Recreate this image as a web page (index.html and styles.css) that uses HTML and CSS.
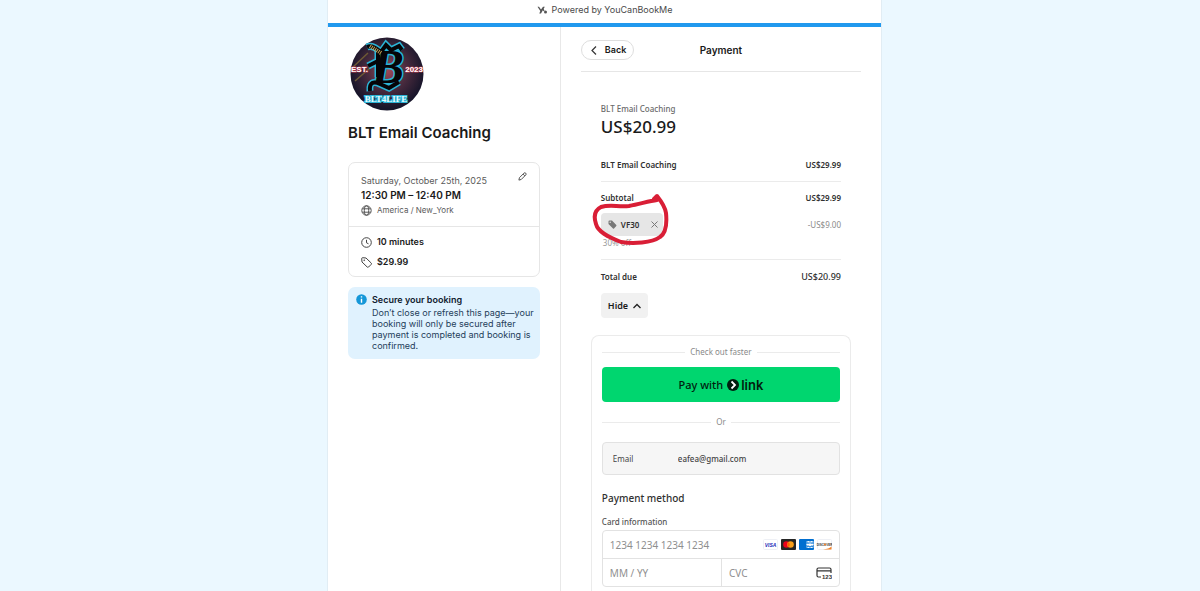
FILE: index.html
```html
<!DOCTYPE html>
<html lang="en">
<head>
    <meta charset="UTF-8">
    <meta name="viewport" content="width=device-width, initial-scale=1.0">
    <title>BLT Email Coaching - Payment</title>
    <link rel="stylesheet" href="styles.css">
</head>
<body>
    <div class="page">
        <header class="powered">
            <svg width="11" height="8" viewBox="0 0 11 8">
                <path d="M.5.800h1.500L4 3.500 6 .8h1.800L4 7.500H2.300L3.300 5z" fill="#555"/>
                <path d="M6 3l1 2" stroke="#555" stroke-width="1.200"/>
                <circle cx="8.500" cy="6" r="1.500" fill="#555"/>
            </svg>
            <span>Powered by YouCanBookMe</span>
        </header>

        <div class="columns">
            <aside class="sidebar">
                <svg class="logo" viewBox="0 0 74 74" role="img" aria-label="BLT4LIFE logo">
                    <defs>
                        <radialGradient id="glow" cx="50%" cy="45%" r="52%">
                            <stop offset="0" stop-color="#a34a59"/>
                            <stop offset="0.5" stop-color="#4c2c3f"/>
                            <stop offset="1" stop-color="#17152a"/>
                        </radialGradient>
                    </defs>
                    <circle cx="37" cy="37" r="36.500" fill="url(#glow)"/>
                    <path d="M3 30L18 16M5 44L20 31" stroke="#6d5a35" stroke-width="1.500"/>
                    <g class="logo-flourish">
                        <path d="M17 10c5-2 9 1 14 5l5-7 5 5 8-4 3 4"/>
                        <path d="M28 14v26M18 29l10-5"/>
                        <path d="M20 54c-1-9 4-10 10-7l9 4 10-6"/>
                    </g>
                    <text class="logo-b" x="38" y="46" text-anchor="middle">B</text>
                    <g class="logo-flourish-fill">
                        <path d="M17 10c5-2 9 1 14 5l5-7 5 5 8-4 3 4"/>
                        <path d="M28 14v26M18 29l10-5"/>
                        <path d="M20 54c-1-9 4-10 10-7l9 4 10-6"/>
                    </g>
                    <path d="M20 9l11 7" stroke="#c9a456" stroke-width="4" stroke-dasharray="1 1"/>
                    <text class="logo-side" x="1" y="35">EST.</text>
                    <text class="logo-side" x="73" y="35" text-anchor="end">2023</text>
                    <text class="logo-foot" x="36" y="65" text-anchor="middle">BLT4LIFE</text>
                </svg>
                <h1>BLT Email Coaching</h1>

                <section class="booking">
                    <div class="booking-when">
                        <button class="edit" aria-label="Edit booking">
                            <svg width="9" height="9" viewBox="0 0 10 10" fill="none" stroke="#444">
                                <path d="M1 9l.6-2.700L6.600 1.300a1.400 1.400 0 0 1 2 2L3.600 8.300zM5.600 2.300l2 2"/>
                            </svg>
                        </button>
                        <p class="date">Saturday, October 25th, 2025</p>
                        <p class="time">12:30 PM – 12:40 PM</p>
                        <p class="zone">
                            <svg width="11" height="11" viewBox="0 0 11 11" fill="none" stroke="#555">
                                <circle cx="5.500" cy="5.500" r="4.700"/>
                                <ellipse cx="5.500" cy="5.500" rx="2.200" ry="4.700"/>
                                <path d="M1.300 3.800h8.400M1.300 7.200h8.400"/>
                            </svg>
                            America / New_York
                        </p>
                    </div>
                    <div class="booking-info">
                        <p>
                            <svg width="11" height="11" viewBox="0 0 11 11" fill="none" stroke="#444">
                                <circle cx="5.500" cy="5.500" r="4.800"/>
                                <path d="M5.500 2.800v3l2 1"/>
                            </svg>
                            10 minutes
                        </p>
                        <p>
                            <svg width="11" height="11" viewBox="0 0 11 11" fill="none" stroke="#444">
                                <path d="M.7 1.700l.3 3.300 5.200 5a1 1 0 0 0 1.400 0l2.600-2.600a1 1 0 0 0 0-1.400L5 1 1.700.7a1 1 0 0 0-1 1z"/>
                                <circle cx="3.200" cy="3.200" r=".4"/>
                            </svg>
                            $29.99
                        </p>
                    </div>
                </section>

                <section class="notice">
                    <svg width="11" height="11" viewBox="0 0 11 11">
                        <circle cx="5.500" cy="5.500" r="5.300" fill="#1597d8"/>
                        <path d="M5.500 4.700v4M5.500 2.200v1.300" stroke="#fff" stroke-width="1.400"/>
                    </svg>
                    <div>
                        <h2>Secure your booking</h2>
                        <p>Don’t close or refresh this page—your booking will only be secured after payment is completed and booking is confirmed.</p>
                    </div>
                </section>
            </aside>

            <main class="payment">
                <div class="payment-header">
                    <button class="back">
                        <svg width="6" height="9" viewBox="0 0 6 9" fill="none" stroke="#333" stroke-width="1.200"><path d="M5 .5l-4 4 4 4"/></svg>
                        Back
                    </button>
                    <h2>Payment</h2>
                </div>

                <section class="summary">
                    <p class="product">BLT Email Coaching</p>
                    <p class="amount">US$20.99</p>
                    <div class="line item"><span>BLT Email Coaching</span><span>US$29.99</span></div>
                    <div class="line subtotal"><span>Subtotal</span><span>US$29.99</span></div>
                    <div class="line discount">
                        <div class="coupon">
                            <svg width="9" height="9" viewBox="0 0 9 9" fill="#777">
                                <path d="M.5 1.500a1 1 0 0 1 1-1H4L8.300 5a.8.8 0 0 1 0 1L6 8.500a.8.8 0 0 1-1 0L.5 4z"/>
                                <circle cx="2.200" cy="2.200" r=".7" fill="#e6e6e6"/>
                            </svg>
                            <span>VF30</span>
                            <button aria-label="Remove coupon">
                                <svg width="7" height="7" viewBox="0 0 7 7" stroke="#777"><path d="M.5.5l6 6M6.500.5l-6 6"/></svg>
                            </button>
                            <svg class="scribble" width="80" height="56" viewBox="0 0 80 56" aria-hidden="true">
                                <path d="M62 7l3-3c4 5 8 10 9 17 1 10 0 20-6 24-8 6-27 7-39 5C16 45 6 40 4 32 1 23 3 18 9 15c9-3 16 0 28-1 11-2 20-5 28-6"/>
                            </svg>
                        </div>
                        <span>-US$9.00</span>
                    </div>
                    <p class="percent">30% off</p>
                    <div class="line total"><span>Total due</span><span>US$20.99</span></div>
                    <button class="hide">
                        Hide
                        <svg width="8" height="6" viewBox="0 0 8 6" fill="none" stroke="#222" stroke-width="1.300"><path d="M.5 5L4 1.500 7.500 5"/></svg>
                    </button>
                </section>

                <form class="checkout">
                    <div class="separator">Check out faster</div>
                    <button type="button" class="pay">
                        Pay with
                        <svg width="12" height="12" viewBox="0 0 12 12">
                            <circle cx="6" cy="6" r="6" fill="#011e0f"/>
                            <path d="M4.500 2.500L8 6 4.500 9.500" fill="none" stroke="#fff" stroke-width="1.800"/>
                        </svg>
                        <span class="link-word">link</span>
                    </button>
                    <div class="separator">Or</div>
                    <div class="email">
                        <label for="email">Email</label>
                        <input id="email" type="email" value="eafea@gmail.com" readonly>
                    </div>

                    <h3>Payment method</h3>
                    <label class="card-label" for="card">Card information</label>
                    <div class="card-fields">
                        <div class="field number">
                            <input id="card" type="text" placeholder="1234 1234 1234 1234">
                            <svg width="69" height="11" viewBox="0 0 69 11" role="img" aria-label="Accepted cards">
                                <rect x=".5" y=".5" width="14" height="10" rx="1" fill="#fff" stroke="#eef0f5"/>
                                <text class="visa" x="7.500" y="8" text-anchor="middle">VISA</text>
                                <rect x="18" width="15" height="11" rx="1" fill="#252525"/>
                                <circle cx="23.500" cy="5.500" r="3.300" fill="#eb001b"/>
                                <circle cx="27.500" cy="5.500" r="3.300" fill="#f79e1b"/>
                                <path d="M25.500 2.900a3.300 3.300 0 0 1 0 5.200 3.300 3.300 0 0 1 0-5.200z" fill="#ff5f00"/>
                                <rect x="36" width="15" height="11" rx="1" fill="#016fd0"/>
                                <path d="M43.500 2h7v7h-7z" fill="#9cc8ee"/>
                                <path d="M45 2l2 3 2-3M43.500 5.500h7M45 9l2-3 2 3" fill="none" stroke="#fff"/>
                                <path d="M44 4h6M44 7.500h6" stroke="#016fd0" stroke-width=".7"/>
                                <rect x="54.500" y=".5" width="14" height="10" rx="1" fill="#fff" stroke="#eef0f5"/>
                                <path d="M60 10.500c4-.5 7-1.500 8.500-3v3z" fill="#f48024"/>
                                <text class="discover" x="61.500" y="6.500" text-anchor="middle">DISCOVER</text>
                                <circle cx="62" cy="5.400" r="1" fill="#f48024"/>
                            </svg>
                        </div>
                        <div class="field">
                            <input type="text" placeholder="MM / YY" aria-label="Expiry date">
                        </div>
                        <div class="field cvc">
                            <input type="text" placeholder="CVC" aria-label="CVC">
                            <svg width="16" height="12" viewBox="0 0 16 12">
                                <path d="M5 10H2.500A1.500 1.500 0 0 1 1 8.500v-6A1.500 1.500 0 0 1 2.500 1h11A1.500 1.500 0 0 1 15 2.500V6M1 3.800h14" fill="none" stroke="#333" stroke-width="1.200"/>
                                <text class="digits" x="16" y="11.500" text-anchor="end">123</text>
                            </svg>
                        </div>
                    </div>
                </form>
            </main>
        </div>
    </div>
</body>
</html>
```
FILE: styles.css
```css
* {
    box-sizing: border-box;
}

body {
    margin: 0;
    padding-left: 9px;
    background-color: #ebf8ff;
    font-family: Inter, "Liberation Sans", sans-serif;
    font-size: 9px;
    color: #1a1a1a;
}

h1, h2, h3, p {
    margin: 0;
}

svg {
    flex-shrink: 0;
}

button, input {
    font-family: inherit;
    color: inherit;
}

button {
    border: none;
    background: none;
    padding: 0;
    cursor: pointer;
}

.page {
    max-width: 555px;
    min-height: 100vh;
    margin: 0 auto;
    display: flex;
    flex-direction: column;
    background-color: #fff;
    border: 1px solid #e1edf4;
    border-width: 0 1px;
}

.powered {
    display: flex;
    justify-content: center;
    align-items: center;
    gap: 4px;
    padding: 4px 0 7px;
    border-bottom: 4px solid #2199ee;
    font-size: 9px;
    line-height: 12px;
    color: #4a4a4a;
}

.columns {
    flex: 1;
    display: grid;
    grid-template-columns: minmax(0, 8fr) minmax(0, 11fr);
}

/* left column */
.sidebar {
    padding: 10px 20px 20px;
    border-right: 1px solid #e8e8e8;
}

.logo {
    display: block;
    width: 76px;
    height: 74px;
    margin-left: 1px;
}

.logo-b {
    font: bold italic 48px "Liberation Serif", serif;
    fill: #050508;
    stroke: #2bb4d6;
    stroke-width: 3px;
    paint-order: stroke;
}

.logo-flourish {
    fill: none;
    stroke: #2bb4d6;
    stroke-width: 7px;
}

.logo-flourish-fill {
    fill: none;
    stroke: #050508;
    stroke-width: 4px;
}

.logo-side {
    font: bold 8px "Liberation Sans", sans-serif;
    fill: #fff;
    stroke: #b63c50;
    stroke-width: 1px;
    paint-order: stroke;
}

.logo-foot {
    font: bold 9px "Liberation Serif", serif;
    fill: #e8fbff;
    stroke: #2bb4d6;
    stroke-width: 2px;
    paint-order: stroke;
}

h1 {
    margin: 11px 0 18px;
    font-size: 15px;
    line-height: 22px;
    font-weight: 600;
}

.booking {
    border: 1px solid #e6e6e6;
    border-radius: 7px;
}

.booking-when {
    position: relative;
    padding: 10px 12px 9px;
    border-bottom: 1px solid #e6e6e6;
}

.edit {
    position: absolute;
    top: 9px;
    right: 12px;
    line-height: 0;
}

.date {
    font-size: 9px;
    line-height: 15px;
    color: #5a5a5a;
}

.time {
    font-size: 10px;
    line-height: 15px;
    font-weight: 600;
}

.zone {
    display: flex;
    align-items: center;
    gap: 5px;
    font-size: 8px;
    line-height: 14px;
    color: #5a5a5a;
}

.booking-info {
    display: grid;
    gap: 8px;
    padding: 9px 12px 8px;
}

.booking-info p {
    display: flex;
    align-items: center;
    gap: 5px;
    line-height: 12px;
    font-weight: 600;
}

.notice {
    display: flex;
    gap: 5px;
    margin-top: 10px;
    padding: 7px 4px 8px 8px;
    border-radius: 7px;
    background-color: #e0f2fe;
    color: #24405a;
}

.notice h2 {
    margin-bottom: 1px;
    font-size: 9px;
    line-height: 12px;
    font-weight: 600;
    color: #10202e;
}

.notice p {
    font-size: 9px;
    line-height: 11px;
}

/* right column */
.payment {
    padding: 13px 20px 0;
}

.payment-header {
    display: grid;
    grid-template-columns: 1fr auto 1fr;
    align-items: center;
    padding-bottom: 11px;
    border-bottom: 1px solid #e6e6e6;
}

.payment-header h2 {
    font-size: 10px;
    line-height: 20px;
    font-weight: 600;
}

.back {
    justify-self: start;
    display: flex;
    align-items: center;
    gap: 8px;
    padding: 0 7px 0 9px;
    border: 1px solid #dedede;
    border-radius: 10px;
    font-size: 9px;
    line-height: 18px;
    font-weight: 600;
}

.summary,
.checkout {
    font-family: "Noto Sans", "Open Sans", sans-serif;
    font-size: 8px;
}

.summary {
    padding: 31px 20px 0;
}

.product {
    line-height: 12px;
    font-weight: 500;
    color: #6b6b6b;
}

.amount {
    font-size: 17px;
    line-height: 24px;
    font-weight: 500;
}

.line {
    display: flex;
    justify-content: space-between;
    align-items: center;
    line-height: 12px;
    font-weight: 600;
    color: #303030;
}

.item {
    padding: 20px 0 10px;
    border-bottom: 1px solid #ebebeb;
}

.subtotal {
    padding: 10px 0 9px;
}

.discount > span {
    font-weight: 400;
    color: #8a8a8a;
}

.coupon {
    position: relative;
    display: flex;
    align-items: center;
    gap: 4px;
    height: 23px;
    padding: 0 5px 0 7px;
    border-radius: 4px;
    background-color: #e6e6e6;
    font-weight: 600;
}

.coupon button {
    margin-left: 8px;
    line-height: 0;
}

.scribble {
    position: absolute;
    top: -21px;
    left: -9px;
    fill: none;
    stroke: #d91e36;
    stroke-width: 4px;
    stroke-linecap: round;
    stroke-linejoin: round;
}

.percent {
    padding: 1px 2px 10px;
    line-height: 12px;
    color: #999;
    border-bottom: 1px solid #ebebeb;
}

.total {
    padding: 11px 0 10px;
}

.total span:last-child {
    font-size: 9px;
    font-weight: 500;
}

.hide {
    display: flex;
    align-items: center;
    gap: 5px;
    padding: 0 7px;
    border-radius: 4px;
    background-color: #f1f1f1;
    font-size: 9px;
    line-height: 25px;
    font-weight: 600;
}

/* payment form */
.checkout {
    margin: 17px 10px 0;
    padding: 10px 10px 40px;
    border: 1px solid #ebebeb;
    border-bottom: none;
    border-radius: 8px 8px 0 0;
}

.separator {
    display: flex;
    align-items: center;
    gap: 5px;
    line-height: 12px;
    color: #8a8a8a;
}

.separator::before,
.separator::after {
    content: "";
    flex: 1;
    height: 1px;
    background-color: #ebebeb;
}

.pay {
    display: flex;
    justify-content: center;
    align-items: center;
    gap: 4px;
    width: 100%;
    height: 35px;
    margin: 9px 0 14px;
    border-radius: 4px;
    background-color: #00d66f;
    color: #011e0f;
    font-size: 11px;
    font-weight: 500;
}

.link-word {
    margin-left: -2px;
    font-family: Inter, sans-serif;
    font-size: 13px;
    font-weight: 600;
}

.email {
    display: grid;
    grid-template-columns: 65px 1fr;
    align-items: center;
    height: 33px;
    margin: 14px 0 16px;
    padding: 0 10px;
    border: 1px solid #e2e2e2;
    border-radius: 4px;
    background-color: #f6f6f6;
    color: #444;
}

.email input {
    width: 100%;
    padding: 0;
    border: none;
    background: none;
    font-size: 8px;
    font-weight: 500;
}

h3 {
    font-size: 10px;
    line-height: 14px;
    font-weight: 500;
    color: #303030;
}

.card-label {
    display: block;
    margin: 11px 0 2px;
    line-height: 12px;
    font-weight: 500;
    color: #555;
}

.card-fields {
    display: grid;
    grid-template-columns: repeat(2, minmax(0, 1fr));
    border: 1px solid #e2e2e2;
    border-radius: 4px;
}

.field {
    display: flex;
    align-items: center;
    height: 27px;
    padding: 0 7px;
}

.number {
    grid-column: span 2;
    height: 28px;
    border-bottom: 1px solid #e2e2e2;
}

.cvc {
    border-left: 1px solid #e2e2e2;
}

.field input {
    flex: 1;
    min-width: 0;
    padding: 0;
    border: none;
    outline: none;
    background: none;
    font-size: 10px;
}

.field input::placeholder {
    color: #8f8f8f;
}

.visa {
    font: italic bold 5px "Liberation Sans", sans-serif;
    fill: #1a2bb8;
}

.discover {
    font: bold 3px "Liberation Sans", sans-serif;
    fill: #333;
}

.digits {
    font: bold 6px "Liberation Sans", sans-serif;
    fill: #333;
}
```
